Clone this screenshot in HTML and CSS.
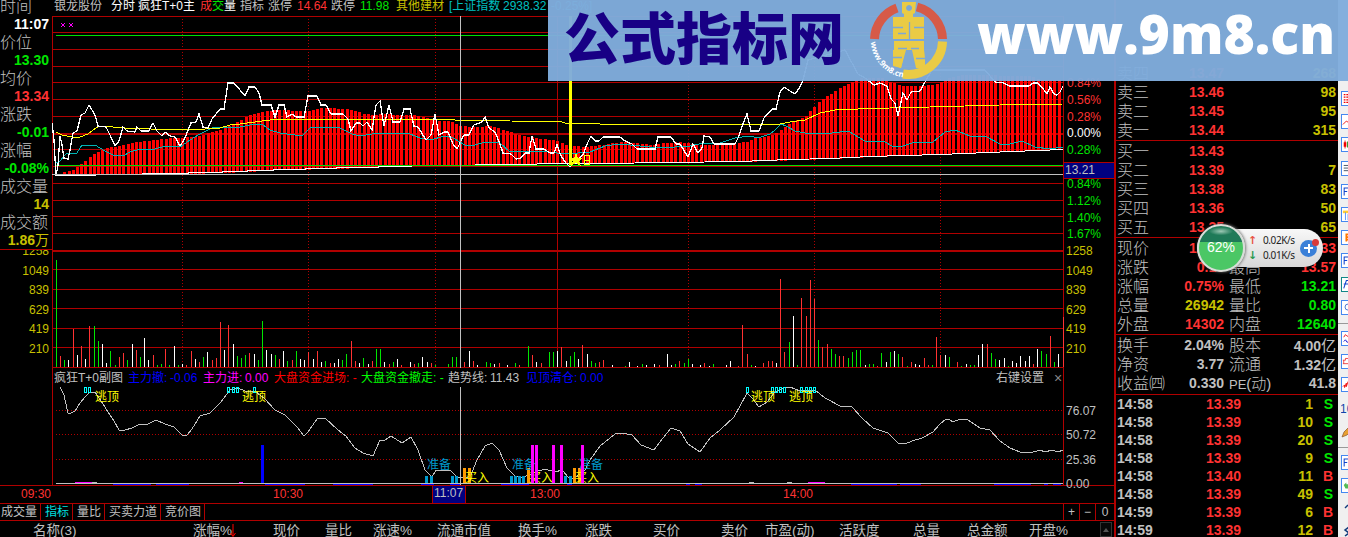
FILE: index.html
```html
<!DOCTYPE html>
<html lang="zh-CN">
<head>
  <meta charset="UTF-8" />
  <title>银龙股份 分时</title>
  <link rel="stylesheet" href="styles.css">
</head>
<body>
  <div class="terminal">
    <div class="main">
      <div class="workspace">
        <!-- 左侧数据 -->
        <div class="left">
          <div class="info">
            <span>时间</span><b class="white">11:07</b>
            <span>价位</span><b class="green">13.30</b>
            <span>均价</span><b class="red">13.34</b>
            <span>涨跌</span><b class="green">-0.01</b>
            <span>涨幅</span><b class="green">-0.08%</b>
            <span>成交量</span><b class="yellow">14</b>
            <span>成交额</span><b class="yellow">1.86<i>万</i></b>
          </div>
          <div class="vol-axis">
            <span>1258</span><span>1049</span><span>839</span><span>629</span><span>419</span><span>210</span>
          </div>
        </div>

        <!-- 图表 -->
        <div class="charts">
          <div class="title-row">
            <span>银龙股份</span><span class="white">分时</span><span class="white">疯狂T+0主</span>
            <span><em class="red">成</em><em class="green">交</em><em class="white">量</em></span>
            <span>指标</span><span>涨停</span><span class="red">14.64</span><span>跌停</span><span class="green">11.98</span>
            <span class="yellow">其他建材</span><span class="cyan">[上证指数</span><span class="cyan">2938.32</span><span class="cyan">-0.25%]</span>
          </div>
          <svg class="price" viewBox="52 16 1012 352" width="1012" height="352">
            <g id="grid"></g>
            <rect class="up" x="56" y="35" width="1007" height="1"/>
            <g id="redBars"></g>
            <polyline class="l-cyan" points="56,163 60,161 66,154 77,153 82,145 95,145 105,151 115,156 125,155 130,152 140,149 155,149 165,146 180,147 190,140 200,134 212,128 225,127 240,127 255,124 263,125 270,130 280,133 302,136 310,128 320,127 340,128 352,134 360,136 372,134 395,133 410,134 420,138 430,140 445,136 453,138 465,145 475,145 485,142 500,143 510,152 540,151 566,154 590,152 605,146 620,144 640,146 660,148 690,146 703,143 720,143 735,138 750,136 758,138 770,134 775,130 781,124 786,126 795,131 805,133 820,134 832,133 848,131 865,141 885,142 892,146 903,146 912,143 933,142 945,132 955,130 970,136 985,136 1000,144 1010,144 1022,141 1035,147 1050,149 1063,147"/>
            <polyline class="l-yellow" points="56,132 62,135 72,137 80,137 88,134 96,128 100,126 125,128 150,129 185,130 205,129 220,128 230,125 240,124 255,122 270,120 448,119.5 455,120 505,120 510,121 560,121.5 565,123 600,124 780,124 790,122 805,120 820,113 835,110 870,108.5 930,107 1000,105 1063,104"/>
            <rect class="up" x="56" y="165" width="1007" height="1"/>
            <polyline class="l-base" points="56,175.5 96,175.5"/>
            <polyline class="l-base" points="142,173.5 188,173.5 189,172.5 222,172.5 223,171.5 247,171.5 248,170.5 273,170.5 274,169.5 305,169.5 306,168.5 336,168.5 337,167.5 378,167.5 379,166.5 412,166.5"/>
            <polyline class="l-base" points="475,164.5 600,163.5 670,162.5 740,161.5 790,159.5 830,158.5 870,156.5 940,154.5 1000,152 1063,149.5"/>
            <rect class="yellow-fill" x="569" y="16" width="3" height="149"/>
            <polyline class="l-price" points="52,123 54,140 56,176 58,165 60,136 62,145 64,158 68,159 70,150 73,133 77,131 81,115 85,113 89,105 95,115 98,126 106,127 110,135 115,146 119,141 123,127 127,131 135,132 137,127 141,131 149,131 153,123 157,131 162,136 165,132 170,136 175,137 180,146 184,140 191,123 196,122 199,114 203,127 208,128 212,119 220,109 224,109 228,83 234,83 240,90 245,96 249,87 255,87 259,93 262,105 271,105 275,117 279,105 284,105 287,117 292,114 296,117 304,117 308,96 317,96 321,105 326,105 331,114 343,114 348,119 351,131 356,123 360,123 363,126 367,122 372,130 376,105 380,101 384,126 389,105 393,122 400,122 404,109 410,109 414,126 418,127 426,140 431,135 435,114 439,135 444,132 448,132 453,144 457,149 460,143 464,135 469,135 474,125 482,122 485,117 489,128 495,132 500,144 503,153 511,154 516,159 521,158 525,153 529,153 532,136 536,149 544,149 550,153 554,153 557,145 561,156 566,163 570,167 573,164 583,155 587,144 591,136 595,141 599,141 603,137 620,137 625,141 632,144 637,149 655,149 658,137 671,137 676,144 680,144 688,157 693,144 698,153 702,148 704,136 710,137 714,144 735,144 739,136 743,124 747,114 751,131 759,131 764,118 772,109 776,109 780,92 784,87 790,91 795,94 800,87 803,80 808,60 845,50 858,74 865,78 874,85 880,83 887,86 891,99 895,103 898,116 903,93 907,100 911,92 920,91 925,82 932,70 985,70 995,82 1004,83 1009,86 1029,86 1033,83 1038,83 1044,90 1047,94 1050,87 1054,94 1057,95 1060,92 1063,86"/>
            <polygon class="yellow-fill" points="576,153 578,158 583,158 579,161 581,166 576,163 571,166 573,161 569,158 574,158"/>
            <path class="sign" d="M584.5 155.5h5v9h-5zM584.5 160.5h5"/>
            <path class="cross" d="M61 23l4 4m0-4l-4 4M69 23l4 4m0-4l-4 4"/>
            <g id="volBars"></g>
            <rect class="hair" x="52" y="174" width="1011" height="1"/>
            <rect class="hair" x="460" y="16" width="1" height="352"/>
          </svg>
          <div class="sub-title">
            <span>疯狂T+0副图</span><span class="blue">主力撤:</span><span class="blue">-0.06</span>
            <span class="magenta">主力进:</span><span class="magenta">0.00</span>
            <span class="pure-red">大盘资金进场: -</span><span class="lime">大盘资金撤走: -</span>
            <span>趋势线:</span><span>11.43</span><span class="blue">见顶清仓:</span><span class="blue">0.00</span>
            <span>右键设置</span><span class="x">×</span>
          </div>
          <svg class="sub" viewBox="52 387 1012 98" width="1012" height="98">
            <path class="dots" d="M56 410.5H1063M56 434.5H1063M56 459.5H1063"/>
            <rect class="rd" x="52" y="387" width="1" height="98"/>
            <rect class="rd" x="1063" y="387" width="1" height="98"/>
            <polyline class="l-trend" points="60,387 64,395 68,413 71,413 75,411 80,403 85,397 90,392 95,392 103,404 108,412 114,421 119,430 125,430 132,428 140,424 148,424 156,420 165,424 174,427 182,435 187,435 192,429 200,416 210,413 220,403 230,390 238,388 245,391 256,392 264,398 275,410 285,415 297,427 304,436 308,432 317,419 325,418 338,430 346,436 355,448 363,453 373,456 380,440 385,440 391,436 402,443 411,437 418,450 425,470 432,477 436,470 450,470 457,477 470,477 477,460 485,446 492,443 499,450 507,468 515,476 522,478 535,472 545,469 555,472 562,470 569,478 575,478 585,470 590,460 600,446 615,434 622,433 632,435 641,445 654,450 663,438 671,428 680,431 688,444 700,452 710,438 720,430 734,417 740,406 747,393 752,398 759,407 767,402 775,392 785,387 790,387 800,391 815,390 825,398 840,406 852,407 862,418 873,428 888,433 898,443 905,444 912,441 922,438 933,432 940,424 946,419 950,420 953,422 960,419 968,420 980,428 990,430 1000,441 1010,448 1020,452 1030,453 1040,450 1045,452 1052,450 1058,452 1063,450"/>
            <g id="signals"></g>
            <g class="warn"><text x="427" y="469">准备</text><text x="512" y="469">准备</text><text x="579" y="469">准备</text></g>
            <g class="buy"><text x="465" y="482">买入</text><text x="529" y="482">买入</text><text x="575" y="482">买入</text></g>
            <g class="buy"><text x="95" y="401">逃顶</text><text x="242" y="401">逃顶</text><text x="751" y="401">逃顶</text><text x="789" y="401">逃顶</text></g>
            <g id="magentaBars"></g>
            <rect class="hair" x="56" y="483" width="1007" height="1"/>
            <rect class="hair" x="460" y="387" width="1" height="98"/>
          </svg>
        </div>

        <!-- 右侧坐标 -->
        <div class="axis">
          <div class="pct">
            <span class="red">0.84%</span><span class="red">0.56%</span><span class="red">0.28%</span><span class="white">0.00%</span>
            <span class="green">0.28%</span><span class="now">13.21</span><span class="green">0.84%</span>
            <span class="green">1.12%</span><span class="green">1.40%</span><span class="green">1.67%</span>
          </div>
          <div class="vol-axis">
            <span>1258</span><span>1049</span><span>839</span><span>629</span><span>419</span><span>210</span>
          </div>
          <div class="sub-axis"><span>76.07</span><span>50.72</span><span>25.36</span><span>0.00</span></div>
        </div>
      </div>

      <div class="time-axis">
        <span>09:30</span><span>10:30</span><span class="cur">11:07</span><span>13:00</span><span>14:00</span>
      </div>
      <div class="tabs">
        <span>成交量</span><span class="on">指标</span><span>量比</span><span>买卖力道</span><span>竞价图</span>
        <div class="zoom"><span>+</span><span>−</span><span>0</span></div>
      </div>
      <div class="columns">
        <span>名称(3)</span><span class="sorted">涨幅%<svg width="6" height="14" viewBox="0 0 6 14"><path d="M3 0v12M0.5 9L3 12.5 5.500 9" stroke="#f00" fill="none"/></svg></span><span>现价</span><span>量比</span><span>涨速%</span><span>流通市值</span><span>换手%</span><span>涨跌</span><span>买价</span><span>卖价</span><span>市盈(动)</span><span>活跃度</span><span>总量</span><span>总金额</span><span>开盘%</span>
        <i class="up-btn"></i>
      </div>
    </div>

    <!-- 盘口 -->
    <div class="quotes">
      <div class="group sell">
        <p><span>卖四</span><b class="red">13.47</b><b class="yellow">268</b></p>
        <p><span>卖三</span><b class="red">13.46</b><b class="yellow">98</b></p>
        <p><span>卖二</span><b class="red">13.45</b><b class="yellow">95</b></p>
        <p><span>卖一</span><b class="red">13.44</b><b class="yellow">315</b></p>
      </div>
      <div class="group">
        <p><span>买一</span><b class="red">13.43</b><b></b></p>
        <p><span>买二</span><b class="red">13.39</b><b class="yellow">7</b></p>
        <p><span>买三</span><b class="red">13.38</b><b class="yellow">83</b></p>
        <p><span>买四</span><b class="red">13.36</b><b class="yellow">50</b></p>
        <p><span>买五</span><b class="red">13.35</b><b class="yellow">65</b></p>
      </div>
      <div class="group pair">
        <p><span>现价</span><b class="red">13.39</b><span>今开</span><b class="red">13.33</b></p>
        <p><span>涨跌</span><b class="red">0.10</b><span>最高</span><b class="red">13.57</b></p>
        <p><span>涨幅</span><b class="red">0.75%</b><span>最低</span><b class="green">13.21</b></p>
        <p><span>总量</span><b class="yellow">26942</b><span>量比</span><b class="green">0.80</b></p>
        <p><span>外盘</span><b class="red">14302</b><span>内盘</span><b class="green">12640</b></p>
      </div>
      <div class="group pair last">
        <p><span>换手</span><b>2.04%</b><span>股本</span><b>4.00<i>亿</i></b></p>
        <p><span>净资</span><b>3.77</b><span>流通</span><b>1.32<i>亿</i></b></p>
        <p><span>收益㈣</span><b>0.330</b><span class="pe"><b>PE</b>(动)</span><b>41.8</b></p>
      </div>
      <div class="trades">
        <p><b>14:58</b><b class="red">13.39</b><b class="yellow">1</b><b class="green">S</b></p>
        <p><b>14:58</b><b class="red">13.39</b><b class="yellow">10</b><b class="green">S</b></p>
        <p><b>14:58</b><b class="red">13.39</b><b class="yellow">20</b><b class="green">S</b></p>
        <p><b>14:58</b><b class="red">13.39</b><b class="yellow">9</b><b class="green">S</b></p>
        <p><b>14:58</b><b class="red">13.40</b><b class="yellow">11</b><b class="red">B</b></p>
        <p><b>14:58</b><b class="red">13.39</b><b class="yellow">49</b><b class="green">S</b></p>
        <p><b>14:59</b><b class="red">13.39</b><b class="yellow">6</b><b class="red">B</b></p>
        <p><b>14:59</b><b class="red">13.39</b><b class="yellow">12</b><b class="red">B</b></p>
      </div>
    </div>

    <!-- 工具条 -->
    <div class="tools">
      <svg viewBox="0 0 15 15"><path d="M2 3h5M2 6h5M2 9h5M2 12h5" stroke="#e00" stroke-width="1.500" stroke-dasharray="2 1"/></svg>
      <svg viewBox="0 0 15 15"><path d="M1 11l4-4 3 2 5-5" stroke="#e00" fill="none"/></svg>
      <svg viewBox="0 0 15 15"><path d="M2 5h3v5H2zM3 3h1v9H3z" fill="#e00"/><path d="M6 4h3v7H6z" fill="#080"/></svg>
      <svg viewBox="0 0 15 15"><path d="M2 4h8M2 7h8M2 10h8" stroke="#345"/></svg>
      <svg viewBox="0 0 15 15"><path d="M2.500 12V3.500H7M2.500 7.500H6" stroke="#1144cc" fill="none" stroke-width="1.200"/></svg>
      <svg viewBox="0 0 15 15"><path d="M1 3h8v3H1z" fill="#fc3"/><path d="M4 5v9M7 7v7" stroke="#48f"/></svg>
      <svg viewBox="0 0 15 15"><path d="M4 4h6M4 7h6M4 10h6M5 3v9" stroke="#f70" stroke-width="2"/></svg>
      <svg viewBox="0 0 15 15"><path d="M2.500 12V3.500H7M2.500 7.500H6" stroke="#1144cc" fill="none" stroke-width="1.200"/></svg>
      <svg viewBox="0 0 15 15" class="teal"><path d="M2 12L5 3h3M2 7h6" stroke="#1144cc" fill="none" stroke-width="1.200"/></svg>
      <svg viewBox="0 0 15 15"><circle cx="7" cy="7" r="3.500" stroke="#36c" fill="none"/></svg>
      <hr>
      <svg viewBox="0 0 15 15"><path d="M2 6l2-3 2 2 3-2" stroke="#e00" fill="none"/><path d="M2 11l2-2 2 3 3-3" stroke="#00c" fill="none"/></svg>
      <svg viewBox="0 0 15 15"><path d="M1 6h3V4h4M1 10h8M2 6v4" stroke="#e33" fill="none"/></svg>
      <svg viewBox="0 0 15 15"><path d="M1 10l2-2v3l2-5v4l2-6" stroke="#e00" fill="none"/></svg>
      <svg viewBox="0 0 15 15" class="bare"><text x="-1" y="12">10</text></svg>
      <svg viewBox="0 0 15 15" class="bare"><path d="M1 13l2-5 6-6 3 3-6 6z" fill="#e8a030" stroke="#853" stroke-width=".7"/></svg>
      <hr>
      <svg viewBox="0 0 15 15"><path d="M2.500 12V3.500H7M2.500 7.500H6" stroke="#1144cc" fill="none" stroke-width="1.200"/></svg>
      <svg viewBox="0 0 15 15"><path d="M2 7l3-3v2h6v5H4z" fill="#5b5"/></svg>
      <svg viewBox="0 0 15 15" class="bare"><path d="M4 6l3-3" stroke="#113a7a" stroke-width="1.500"/></svg>
      <svg viewBox="0 0 15 15" class="bare"><path d="M8 2L4 5l4 3-4 3" stroke="#113a7a" fill="none" stroke-width="1.500"/></svg>
    </div>
  </div>

  <!-- 顶部横幅 -->
  <div class="banner">
    <svg viewBox="548 0 800 81" width="800" height="81">
      <text class="site" x="564" y="59" textLength="280">公式指标网</text>
      <g fill="none" stroke-width="9">
        <path d="M874.500 39A34 34 0 0 1 897 8" stroke="#d65a48"/>
        <path d="M917 7A34 34 0 0 1 942.500 39" stroke="#d65a48"/>
        <path d="M942.500 41.500A34 34 0 0 1 903 74" stroke="#eacb45"/>
      </g>
      <g fill="#eacb45">
        <path fill-rule="evenodd" d="M902 2h14l-1 11-2 1v3h11v22h-31V17h11v-3l-2-1zM909 5a3 3 0 1 0 .1 0z"/>
        <path d="M894 41h30v9h-12l4 18h9v-8l-1-10h-30v10l-1 6 8 2 5-18h-12z"/>
        <path d="M893 50h12l-4 18-8-3zM913 50h11l1 15-8 3z"/>
      </g>
      <path d="M893 27.500h10M898 33.500h8M909.500 22v17M914 27.500h10M898 48.500h9M911 48.500h8M893 57.500h9M916 58.500h9" stroke="#7da8d6" stroke-width="1.300"/>
      <path id="arc" d="M871 42A38 38 0 0 0 901 77" fill="none"/>
      <text class="small"><textPath href="#arc">www.9m8.cn</textPath></text>
      <text class="url" x="977" y="54" textLength="358" lengthAdjust="spacingAndGlyphs">www.9m8.cn</text>
    </svg>
  </div>

  <!-- 网速悬浮球 -->
  <div class="speed">
    <div class="ball"><span>62%</span></div>
    <div class="rates">
      <p><i class="r">↑</i>0.02K/s</p>
      <p><i class="g">↓</i>0.01K/s</p>
    </div>
    <div class="plus"></div>
  </div>
  <script src="chart.js"></script>
</body>
</html>
```
FILE: styles.css
```css
* { margin: 0; padding: 0; box-sizing: border-box; }
body {
  width: 1348px;
  height: 537px;
  overflow: hidden;
  position: relative;
  background: #000;
  color: #c0c0c0;
  font: 12px/18px "Liberation Sans", "Noto Sans CJK SC", sans-serif;
}
i, em { font-style: normal; font-weight: normal; }
svg { display: block; }
span, b { white-space: nowrap; }

.red { color: #ff3232; }
.pure-red { color: #f00; }
.green { color: #00e600; }
.lime { color: #0f0; }
.yellow { color: #c8c000; }
.white { color: #fff; }
.cyan { color: #00c0c0; }
.blue { color: #00f; }
.magenta { color: #f0f; }

.terminal { display: flex; height: 537px; overflow: hidden; }
.main { width: 1115px; flex: none; }
.workspace { display: grid; grid-template-columns: 52px 1012px 51px; height: 485px; }

/* 左侧 */
.info {
  height: 250px;
  overflow: hidden;
  border-bottom: 1px solid #b00000;
  display: flex;
  flex-direction: column;
}
.info > * { height: 18px; flex: none; line-height: 18px; }
.info span { font-size: 16px; font-weight: 300; line-height: 20px; }
.info > :first-child { height: 15px; line-height: 13px; }
.info b { font-size: 14px; text-align: right; padding-right: 3px; }
.info b i { font-size: 14px; }
.left .vol-axis { padding-right: 3px; text-align: right; height: 118px; }
.vol-axis { display: flex; flex-direction: column; color: #c8c000; overflow: hidden; }
.vol-axis span { height: 19.600px; flex: none; line-height: 19px; }
.left .vol-axis span:first-child { margin-top: -8px; }

/* 图表 */
.title-row {
  height: 16px;
  line-height: 13px;
  display: grid;
  grid-template-columns: 57px 27px 62px 40px 28px 29px 34px 29px 36px 53px 54px 48px 60px;
  padding-left: 2px;
  overflow: hidden;
}
.sub-title {
  height: 19px;
  line-height: 20px;
  display: grid;
  grid-template-columns: 74px 42px 33px 42px 29px 87px 87px 42px 36px 54px 416px 58px 20px;
  padding-left: 1px;
  border-left: 1px solid #b00000;
  border-right: 1px solid #b00000;
}
.sub-title .x { font-size: 14px; color: #888; }
.price, .sub { shape-rendering: crispEdges; }
.rd { fill: #b00000; }
.up { fill: #00e000; }
.hair { fill: #c0c0c0; }
.yellow-fill { fill: #ff0; }
.dots { stroke: #b00000; stroke-dasharray: 1 2; fill: none; }
.l-cyan { fill: none; stroke: #00b4b4; }
.l-yellow { fill: none; stroke: #ff0; }
.l-base { fill: none; stroke: #fff; }
.l-price { fill: none; stroke: #fff; stroke-width: 1.3; }
.l-trend { fill: none; stroke: #c0c0c0; }
.sign { fill: none; stroke: #ff0; }
.cross { fill: none; stroke: #f0f; }
.warn text { fill: #0099cc; font-size: 12px; }
.buy text { fill: #ff0; font-size: 12px; }

/* 右侧坐标 */
.axis { border-right: 1px solid #b00000; }
.pct { height: 242px; padding-top: 75px; display: flex; flex-direction: column; }
.pct span { height: 16.800px; flex: none; line-height: 17px; padding-left: 3px; }
.pct .now {
  height: 17px;
  line-height: 15px;
  margin: 3px 0 -3px -1px;
  padding-left: 1px;
  background: #000080;
  border: 1px solid #b00000;
  border-right: 0;
}
.axis .vol-axis { padding-left: 2px; height: 126px; }
.sub-axis { display: flex; flex-direction: column; padding: 34px 0 0 2px; }
.sub-axis span { height: 24.400px; line-height: 18px; }

/* 底部 */
.time-axis {
  height: 19px;
  display: grid;
  grid-template-columns: 252px 159px 98px 253px 60px;
  padding-left: 21px;
  border-top: 1px solid #b00000;
  border-bottom: 1px solid #b00000;
  border-right: 1px solid #b00000;
  line-height: 17px;
  color: #ff3232;
}
.time-axis .cur {
  width: 34px;
  padding-left: 1px;
  line-height: 15px;
  background: #000080;
  color: #c0c0c0;
  border-left: 1px solid #b00000;
  border-right: 1px solid #b00000;
}
.tabs {
  height: 17px;
  display: flex;
  line-height: 17px;
  border-bottom: 1px solid #b00000;
  border-right: 1px solid #b00000;
}
.tabs > span { padding: 0 3px 0 4px; border-right: 1px solid #b00000; }
.tabs > span:first-child { padding-left: 1px; }
.tabs .on { color: #00e0e0; }
.zoom { display: flex; margin-left: auto; }
.zoom span { width: 16px; text-align: center; border-left: 1px solid #b00000; }
.zoom span:last-child { width: 19px; }
.columns {
  height: 16px;
  overflow: hidden;
  display: grid;
  grid-template-columns: 160px 80px 52px 48px 64px 81px 67px 68px 68px 44px 74px 74px 54px 62px 71px 12px;
  padding-left: 33px;
  font-size: 13.500px;
  line-height: 20px;
  border-right: 1px solid #b00000;
}
.columns svg { display: inline-block; vertical-align: -3px; margin-left: -2px; }
.up-btn { height: 15px; margin-top: 1px; border: 1px solid #333; position: relative; background: #080808; }
.up-btn::after {
  content: "";
  position: absolute;
  left: 2px;
  top: 5px;
  border: 3px solid transparent;
  border-top: 0;
  border-bottom: 4px solid #555;
}

/* 盘口 */
.quotes { width: 223px; flex: none; border-left: 1px solid #b00000; font-size: 14px; }
.quotes p { display: grid; height: 19px; line-height: 19px; padding: 0 2px 0 1px; }
.quotes p > span { font-size: 16px; font-weight: 300; }
.quotes p > b { text-align: right; }
.quotes p i { font-size: 15px; }
.group { padding-top: 1px; border-bottom: 1px solid #b00000; }
.group p { grid-template-columns: 53px 54px 112px; }
.group.pair p { grid-template-columns: 48px 59px 5px 107px; }
.group.pair p > :nth-child(3) { grid-column: 3 / 5; grid-row: 1; padding-left: 5px; }
.group.pair p > :nth-child(4) { grid-column: 4; grid-row: 1; }
.group.sell { padding-top: 64px; }
.group.last { padding-bottom: 1px; }
.quotes .pe { font-size: 15px; }
.pe b { font-size: 13px; }
.trades p { height: 18px; line-height: 18px; grid-template-columns: 36px 88px 72px 20px; }
.trades b:first-child { text-align: left; }

/* 工具条 */
.tools {
  width: 10px;
  flex: none;
  overflow: hidden;
  background: #f0f0f0;
  padding: 91px 0 0 3px;
  display: flex;
  flex-direction: column;
  gap: 8.200px;
}
.tools svg { width: 15px; height: 15px; flex: none; background: #fff; border: 1px solid #4488f0; }
.tools .teal { border-color: #188; }
.tools .bare { background: none; border: 0; }
.tools .bare text { font-size: 12px; fill: #14a; }
.tools hr { border: 0; border-top: 1px solid #999; margin: 0 0 -1px -3px; width: 20px; flex: none; }

/* 横幅 */
.banner { position: absolute; left: 548px; top: 0; background: rgba(128, 172, 220, .97); }
.site { font: 900 56px "Noto Sans CJK SC", sans-serif; fill: #180085; }
.url { font: 800 54px "Open Sans", sans-serif; fill: #fff; }
.small { font: bold 8px "Open Sans", sans-serif; fill: #fff; }

/* 悬浮球 */
.speed {
  position: absolute;
  left: 1197px;
  top: 229px;
  width: 126px;
  height: 38px;
  border-radius: 19px;
  background: linear-gradient(#f8f8f8, #d8d8d8);
  color: #222;
  display: flex;
  align-items: center;
}
.ball {
  width: 48px;
  height: 48px;
  flex: none;
  border-radius: 50%;
  border: 2px solid #d8ddd8;
  background: radial-gradient(ellipse 12px 4px at 50% 12%, #9cc8b4, transparent), linear-gradient(#1f7a58 0 36%, #4bc765 36% 100%);
  box-shadow: 1px 0 3px #777;
  color: #fff;
  font: 14px/42px "Liberation Sans", sans-serif;
  text-align: center;
}
.rates { width: 54px; font: 10px/15px "Noto Sans", sans-serif; padding-left: 3px; letter-spacing: -.4px; }
.rates p { white-space: nowrap; }
.rates i { display: inline-block; width: 15px; font: bold 11px "DejaVu Sans"; }
.rates .r { color: #e85545; }
.rates .g { color: #2a9a50; }
.plus {
  width: 17px;
  height: 17px;
  margin-left: 1px;
  border-radius: 50%;
  position: relative;
  background: linear-gradient(#fff, #fff) center / 9px 2px no-repeat, linear-gradient(#fff, #fff) center / 2px 9px no-repeat, #3a80d8;
}
.plus::after {
  content: "";
  position: absolute;
  right: -2px;
  top: -1px;
  width: 7px;
  height: 7px;
  border-radius: 50%;
  background: #d83a3a;
}
```
FILE: chart.js
```js
const NS = 'http://www.w3.org/2000/svg';

function rect(id, x, y, w, h, fill) {
  const r = document.createElementNS(NS, 'rect');
  r.setAttribute('x', x);
  r.setAttribute('y', y);
  r.setAttribute('width', w);
  r.setAttribute('height', h);
  r.setAttribute('fill', fill);
  document.getElementById(id).appendChild(r);
  return r;
}

// linear interpolation over [x, y] pairs
function at(points, x) {
  for (let i = 1; i < points.length; i++) {
    const [x0, y0] = points[i - 1];
    const [x1, y1] = points[i];
    if (x <= x1) return y0 + (y1 - y0) * (x - x0) / (x1 - x0);
  }
  return points[points.length - 1][1];
}

// grid
[16, 32, 49, 66, 82, 99, 116, 149, 166, 183, 200, 216, 233, 269, 289, 308, 328, 347, 367].forEach(y => rect('grid', 52, y, 1012, 1, '#b00000'));
rect('grid', 52, 133, 1012, 2, '#b00000');
rect('grid', 52, 250, 1012, 2, '#b00000');
[52, 557, 1063].forEach(x => rect('grid', x, 16, 1, 352, '#b00000'));
[182, 308, 435, 688, 814, 940].forEach(x => {
  for (let y = 19; y < 367; y += 3) rect('grid', x, y, 1, 1, '#b00000');
});

// red columns
const tops = [[56, 175], [60, 173], [66, 171], [72, 170], [76, 167], [82, 163], [88, 158], [94, 153], [100, 150], [108, 147], [120, 146], [130, 143], [145, 141], [160, 139], [175, 138], [193, 137], [205, 134], [215, 131], [225, 128], [235, 122], [245, 117], [255, 113], [265, 111], [280, 110], [298, 111], [308, 111], [322, 108], [345, 109], [360, 113], [370, 115], [380, 114], [400, 115], [415, 115], [425, 118], [440, 121], [450, 121], [460, 126], [475, 127], [490, 126], [500, 129], [510, 132], [520, 136], [535, 138], [550, 140], [560, 142], [566, 145], [582, 147], [590, 146], [600, 145], [620, 142], [635, 143], [650, 145], [665, 143], [680, 142], [690, 144], [700, 145], [730, 144], [745, 142], [755, 138], [765, 137], [775, 133], [785, 126], [795, 120], [805, 116], [812, 108], [820, 100], [830, 94], [840, 87], [850, 82], [860, 78], [880, 78], [890, 82], [900, 86], [920, 86], [935, 84], [945, 79], [960, 75], [1030, 76], [1040, 80], [1063, 80]];
const base = [[56, 174], [188, 174], [222, 173], [247, 172], [280, 170], [336, 169], [378, 167], [412, 166], [475, 165], [600, 163], [740, 162], [830, 159], [940, 154], [1000, 152], [1063, 150]];
for (let i = 1; i < 240; i++) {
  const x = Math.round(55 + i * 4.213);
  if (x === 567 || x === 568 || x === 569 || x > 1061) continue;
  const y = Math.round(at(tops, x));
  rect('redBars', x, y, 3, Math.round(at(base, x)) - y, '#f00');
}

// volume, "colour x:top"
const volume = 'g56:260 r60:356 g64:360 w68:360 r73:329 w77:355 r81:346 w85:359 r89:326 g94:326 g98:341 w102:344 w106:363 g110:351 g115:365 r119:357 r123:353 g127:360 w132:344 r136:350 g140:357 w144:338 w148:360 r153:355 g157:365 g161:364 r165:349 g169:365 w174:346 g178:365 w182:364 r186:365 r191:351 w195:359 r199:362 g203:357 w207:352 r212:360 r216:358 r220:322 w224:350 r228:325 w233:344 g237:356 g241:358 g245:355 r249:353 w254:354 g258:360 g262:321 w266:350 w271:354 g275:355 r279:359 w283:351 g287:361 r292:360 g296:351 ' +
  'w300:359 w304:360 r308:352 w313:359 r317:351 w321:362 g325:361 r330:363 w334:363 w338:359 g342:360 g346:354 r351:341 r355:361 w359:363 g363:358 w368:364 r372:361 g376:349 g380:349 w384:362 r389:364 g393:362 w397:359 r401:365 w410:362 r414:364 g418:363 w422:357 w427:362 r431:363 g435:365 g448:364 g452:357 g456:357 g460:358 r464:362 w469:351 r473:361 w477:365 g486:362 g490:363 w494:364 r499:363 w507:365 g515:363 r519:365 g528:346 r532:355 w536:362 r541:363 g549:352 g553:352 w557:351 r561:347 w566:361 g570:356 g574:352 w578:359 r582:345 w587:354 g591:361 g595:363 r599:362 r603:360 w612:365 g625:366 w629:362 w637:366 g642:364 w646:365 w654:364 r659:365 w667:354 w671:365 g675:364 r679:361 g684:363 g688:359 w692:364 ' +
  'w700:365 r704:363 w709:366 g713:364 w726:365 w730:361 r738:366 r742:325 r747:354 g751:365 w755:366 r763:363 r768:361 r772:361 w776:363 r780:279 r784:352 g789:342 w793:316 g797:365 r801:298 r806:316 r810:280 r814:299 g818:340 r822:347 r827:344 g831:349 g835:354 r839:356 r843:356 g848:358 g852:352 g856:350 g860:350 w865:365 g869:364 g873:364 r877:366 g881:353 w886:362 g890:352 w894:351 g898:354 r902:357 g907:366 r911:362 w915:364 w919:365 r924:358 r928:365 g932:365 r936:337 r940:355 w945:355 g949:357 r957:362 g961:366 w966:364 g970:365 g974:365 w978:355 w982:344 r987:344 g991:353 g995:359 w999:360 w1004:358 g1008:366 w1012:361 w1016:363 w1020:356 w1025:361 w1029:356 r1033:364 w1037:349 g1041:351 g1046:354 r1050:336 g1054:362 w1058:354 r1063:317';
const volColor = { r: '#ff3232', g: '#00e600', w: '#fff' };
volume.split(' ').forEach(item => {
  const [x, y] = item.slice(1).split(':').map(Number);
  rect('volBars', x, y, 1, 367 - y, volColor[item[0]]);
});

// sub chart
rect('signals', 261, 445, 3, 38, '#00f');
[425, 430, 451, 455, 510, 514, 518, 522, 564, 569].forEach(x => rect('signals', x, 476, 3, 7, '#0099cc'));
[463, 468, 527, 573, 578].forEach(x => rect('signals', x, 468, 3, 15, '#ff9900'));
[531, 535, 552, 560, 581].forEach(x => rect('magentaBars', x, 445, 3, 38, '#f0f'));
[[75, 17], [239, 4], [808, 17]].forEach(([x, w]) => rect('signals', x, 482, w, 1, '#f0f'));
[[92, 5], [749, 5], [787, 5]].forEach(([x, w]) => rect('signals', x, 482, w, 1, '#c0c0c0'));
[[113, 38], [156, 33], [265, 40], [333, 40], [421, 13], [450, 10], [501, 28], [567, 5], [686, 4], [695, 7], [851, 46], [900, 21], [994, 37], [1044, 4], [1053, 8]].forEach(([x, w]) => rect('signals', x, 484, w, 1, '#00f'));
[84, 88, 227, 232, 236, 253, 746, 771, 775, 779, 783, 800, 805, 809, 813].forEach(x => {
  const r = rect('signals', x + .5, 387.5, 2, 5, 'none');
  r.setAttribute('stroke', '#0ff');
});
```
